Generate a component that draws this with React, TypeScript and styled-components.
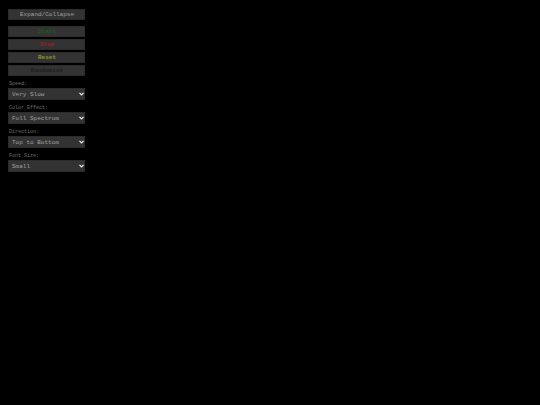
import React from "react";
import styled, { createGlobalStyle } from "styled-components";

const GlobalStyle = createGlobalStyle`
  *, *::before, *::after { box-sizing: border-box; }
  body { margin: 0; background: #000; font-family: "Liberation Mono", monospace; }
`;

const Panel = styled.main`
  display: flex;
  flex-direction: column;
  width: 93px;
  padding: 9px 8px;
`;

const Button = styled.button<{ $color: string; $bold?: boolean }>`
  height: 11px;
  margin: 0 0 2px;
  padding: 0 0 0 1px;
  border: 1px solid #2c2c2c;
  background: #333;
  color: ${(p) => p.$color};
  font: ${(p) => (p.$bold ? "bold" : "normal")} 6px/9px "Liberation Mono", monospace;
`;

const Toggle = styled(Button)`
  margin-bottom: 6px;
`;

const Label = styled.label`
  margin: 3px 0 1px;
  padding-left: 1px;
  color: #707070;
  font-size: 5px;
  line-height: 6px;
`;

const SelectBox = styled.div`
  display: grid;
  align-items: center;
  margin-bottom: 2px;
`;

const Select = styled.select`
  grid-area: 1 / 1;
  appearance: none;
  width: 100%;
  height: 12px;
  padding: 1px 3px 0;
  border: 1px solid #2c2c2c;
  border-radius: 0;
  background: #333;
  color: #a0a0a0;
  font: 6px/9px "Liberation Mono", monospace;
`;

const Chevron = styled.svg`
  grid-area: 1 / 1;
  justify-self: end;
  width: 5px;
  height: 4px;
  margin-right: 1px;
  pointer-events: none;
`;

const settings = [
  { id: "speed", label: "Speed:", options: ["Very Slow", "Slow", "Fast"] },
  { id: "effect", label: "Color Effect:", options: ["Full Spectrum"] },
  { id: "direction", label: "Direction:", options: ["Top to Bottom", "Bottom to Top"] },
  { id: "size", label: "Font Size:", options: ["Small", "Medium", "Large"] },
];

export default function App() {
  return (
    <>
      <GlobalStyle />
      <Panel>
        <Toggle $color="#a0a0a0">Expand/Collapse</Toggle>
        <Button $color="#1c5a1c" $bold>Start</Button>
        <Button $color="#962222" $bold>Stop</Button>
        <Button $color="#94942c" $bold>Reset</Button>
        <Button $color="#1e1e1e" $bold>Randomize</Button>
        {settings.map((s) => (
          <React.Fragment key={s.id}>
            <Label htmlFor={s.id}>{s.label}</Label>
            <SelectBox>
              <Select id={s.id}>
                {s.options.map((option) => (
                  <option key={option}>{option}</option>
                ))}
              </Select>
              <Chevron viewBox="0 0 5 4" aria-hidden="true">
                <path d="M0.5 0.9 2.5 2.9 4.5 0.9" fill="none" stroke="#eee" strokeWidth="1.3" />
              </Chevron>
            </SelectBox>
          </React.Fragment>
        ))}
      </Panel>
    </>
  );
}
